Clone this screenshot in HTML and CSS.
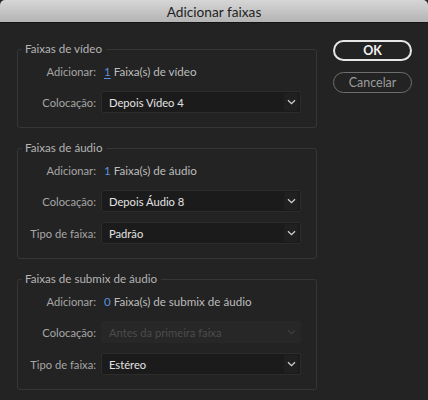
FILE: index.html
```html
<!DOCTYPE html>
<html lang="pt">
<head>
<meta charset="utf-8">
<title>Adicionar faixas</title>
<link rel="stylesheet" href="styles.css">
</head>
<body>
<div class="window">
  <div class="titlebar">Adicionar faixas</div>
  <div class="content">
    <div class="groups">
      <fieldset class="group">
        <legend>Faixas de vídeo</legend>
        <div class="row">
          <span class="label">Adicionar:</span>
          <span class="value"><span class="num focus">1</span> Faixa(s) de vídeo</span>
        </div>
        <div class="row">
          <span class="label">Colocação:</span>
          <div class="select"><span>Depois Vídeo 4</span><span class="chev"><svg width="9" height="6" viewBox="0 0 9 6"><path d="M1 1.2 L4.5 4.6 L8 1.2" fill="none" stroke="currentColor" stroke-width="1.3"/></svg></span></div>
        </div>
      </fieldset>
      <fieldset class="group">
        <legend>Faixas de áudio</legend>
        <div class="row">
          <span class="label">Adicionar:</span>
          <span class="value"><span class="num">1</span> Faixa(s) de áudio</span>
        </div>
        <div class="row">
          <span class="label">Colocação:</span>
          <div class="select"><span>Depois Áudio 8</span><span class="chev"><svg width="9" height="6" viewBox="0 0 9 6"><path d="M1 1.2 L4.5 4.6 L8 1.2" fill="none" stroke="currentColor" stroke-width="1.3"/></svg></span></div>
        </div>
        <div class="row">
          <span class="label">Tipo de faixa:</span>
          <div class="select"><span>Padrão</span><span class="chev"><svg width="9" height="6" viewBox="0 0 9 6"><path d="M1 1.2 L4.5 4.6 L8 1.2" fill="none" stroke="currentColor" stroke-width="1.3"/></svg></span></div>
        </div>
      </fieldset>
      <fieldset class="group">
        <legend>Faixas de submix de áudio</legend>
        <div class="row">
          <span class="label">Adicionar:</span>
          <span class="value"><span class="num">0</span> Faixa(s) de submix de áudio</span>
        </div>
        <div class="row">
          <span class="label">Colocação:</span>
          <div class="select disabled"><span>Antes da primeira faixa</span><span class="chev"><svg width="9" height="6" viewBox="0 0 9 6"><path d="M1 1.2 L4.5 4.6 L8 1.2" fill="none" stroke="currentColor" stroke-width="1.3"/></svg></span></div>
        </div>
        <div class="row">
          <span class="label">Tipo de faixa:</span>
          <div class="select"><span>Estéreo</span><span class="chev"><svg width="9" height="6" viewBox="0 0 9 6"><path d="M1 1.2 L4.5 4.6 L8 1.2" fill="none" stroke="currentColor" stroke-width="1.3"/></svg></span></div>
        </div>
      </fieldset>
    </div>
    <div class="buttons">
      <button class="btn primary">OK</button>
      <button class="btn">Cancelar</button>
    </div>
  </div>
</div>
</body>
</html>
```
FILE: styles.css
```css
html, body {
  margin: 0;
  padding: 0;
  background: #232323;
}
body {
  width: 428px;
  height: 400px;
  overflow: hidden;
  font-family: Lato, "Liberation Sans", sans-serif;
  font-size: 11px;
}
.window {
  width: 428px;
  height: 400px;
  background: #232323;
}
.titlebar {
  height: 22px;
  line-height: 24px;
  text-align: center;
  font-size: 13.7px;
  color: #1e1e1e;
  background: linear-gradient(#d6d6d6, #b4b4b4);
  border-bottom: 1px solid #141414;
  border-top-left-radius: 5px;
  border-top-right-radius: 5px;
}
.content {
  display: flex;
  gap: 16px;
  padding: 18px 0 0 17px;
}
.groups {
  display: flex;
  flex-direction: column;
  gap: 12px;
  width: 300px;
}
.group {
  margin: 0;
  padding: 4px 15px 14px 0;
  border: 1px solid #363636;
  border-radius: 3px;
  display: flex;
  flex-direction: column;
  gap: 10px;
}
.group legend {
  padding: 0 4px 0 3px;
  margin-left: 4px;
  height: 16px;
  line-height: 16px;
  color: #b4b4b4;
  font-size: 11.6px;
}
.row {
  display: flex;
  align-items: center;
  gap: 5px;
  min-height: 20px;
}
.label {
  width: 78px;
  text-align: right;
  color: #a6a6a6;
  font-size: 11.2px;
  flex: none;
}
.value {
  color: #bdbdbd;
  font-size: 11.6px;
  padding-left: 3px;
}
.num {
  color: #5b8fdc;
}
.num.focus {
  text-decoration: underline;
  text-underline-offset: 2px;
}
.select {
  flex: 1;
  height: 20px;
  display: flex;
  align-items: center;
  justify-content: space-between;
  background: #1b1b1b;
  border: 1px solid #2c2c2c;
  border-radius: 2px;
  padding-left: 7px;
  color: #e2e2e2;
  font-size: 11.2px;
}
.select .chev {
  width: 14px;
  height: 18px;
  margin-right: 2px;
  border-radius: 2px;
  display: flex;
  align-items: center;
  justify-content: center;
  color: #d0d0d0;
  background: #202020;
}
.select.disabled {
  background: #272727;
  border-color: #272727;
  color: #4c4c4c;
}
.select.disabled .chev {
  background: transparent;
  color: #3e3e3e;
}
.buttons {
  display: flex;
  flex-direction: column;
  gap: 11px;
  margin-top: -1px;
}
.btn {
  width: 79px;
  height: 21px;
  border-radius: 11px;
  background: transparent;
  font-family: Lato, "Liberation Sans", sans-serif;
  font-size: 12.5px;
  padding: 0;
  color: #9c9c9c;
  border: 1.5px solid #6e6e6e;
}
.btn.primary {
  color: #f2f2f2;
  font-weight: bold;
  border: 2px solid #e6e6e6;
}
```
